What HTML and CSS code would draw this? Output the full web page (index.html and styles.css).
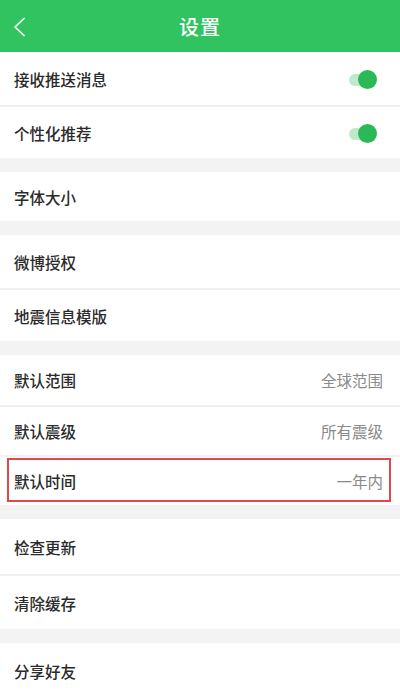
FILE: index.html
```html
<!DOCTYPE html>
<html lang="zh">
<head>
<meta charset="utf-8">
<title>设置</title>
<link rel="stylesheet" href="styles.css">
</head>
<body>
<header class="topbar">
  <svg class="back" width="14" height="20" viewBox="0 0 14 20"><polyline points="11,1.5 2,10 11,18.5" fill="none" stroke="#fff" stroke-width="1.7" stroke-linecap="round" stroke-linejoin="round"/></svg>
  <h1 class="title">设置</h1>
</header>
<main class="list">
  <section class="group">
    <div class="row"><span class="label">接收推送消息</span><span class="toggle"><span class="track"></span><span class="thumb"></span></span></div>
    <div class="row"><span class="label">个性化推荐</span><span class="toggle"><span class="track"></span><span class="thumb"></span></span></div>
  </section>
  <section class="group">
    <div class="row row-short"><span class="label">字体大小</span></div>
  </section>
  <section class="group">
    <div class="row"><span class="label">微博授权</span></div>
    <div class="row"><span class="label">地震信息模版</span></div>
  </section>
  <section class="group">
    <div class="row row-mid"><span class="label">默认范围</span><span class="value">全球范围</span></div>
    <div class="row row-mid"><span class="label">默认震级</span><span class="value">所有震级</span></div>
    <div class="row row-mid highlighted"><span class="label">默认时间</span><span class="value">一年内</span><span class="mark"></span></div>
  </section>
  <section class="group">
    <div class="row row-tall"><span class="label">检查更新</span></div>
    <div class="row row-tall"><span class="label">清除缓存</span></div>
  </section>
  <section class="group group-last">
    <div class="row row-fill"><span class="label">分享好友</span></div>
  </section>
</main>
</body>
</html>
```
FILE: styles.css
```css
* { box-sizing: border-box; }
html, body { margin: 0; padding: 0; }
body {
  width: 400px;
  height: 699px;
  overflow: hidden;
  background: #f3f3f3;
  font-family: "Noto Sans CJK SC", "Noto Sans", sans-serif;
  display: flex;
  flex-direction: column;
}
.topbar {
  height: 52px;
  flex: none;
  background: #30c35f;
  display: flex;
  align-items: center;
  justify-content: center;
  position: relative;
}
.back {
  position: absolute;
  left: 13px;
  top: 17px;
}
.title {
  margin: 0;
  color: #fff;
  font-size: 20px;
  font-weight: 500;
  letter-spacing: 1px;
}
.list {
  flex: 1;
  display: flex;
  flex-direction: column;
  gap: 14px;
}
.group {
  background: #fff;
  display: flex;
  flex-direction: column;
}
.group-last { flex: 1; }
.row {
  height: 53px;
  padding: 0 17px 0 14px;
  display: flex;
  align-items: center;
  justify-content: space-between;
  position: relative;
}
.row + .row { border-top: 2px solid #f0f0f0; }
.row-short { height: 49px; }
.row-mid { height: 50px; }
.row-tall { height: 55px; }
.row-fill { height: auto; flex: 1; }
.label {
  font-size: 15.5px;
  color: #2a2a2a;
  font-weight: 500;
}
.value {
  font-size: 15.5px;
  color: #8a8a8a;
}
.toggle {
  position: relative;
  width: 28px;
  height: 20px;
  margin-right: 6px;
  top: 1px;
}
.track {
  position: absolute;
  left: 0;
  top: 4px;
  width: 24px;
  height: 12px;
  border-radius: 6px;
  background: #bfe9cc;
}
.thumb {
  position: absolute;
  right: 0;
  top: 0;
  width: 19px;
  height: 19px;
  border-radius: 50%;
  background: #2bb957;
}
.mark {
  position: absolute;
  left: 7px;
  right: 9px;
  top: 1px;
  bottom: 3px;
  border: 2px solid #e2474c;
}
```
